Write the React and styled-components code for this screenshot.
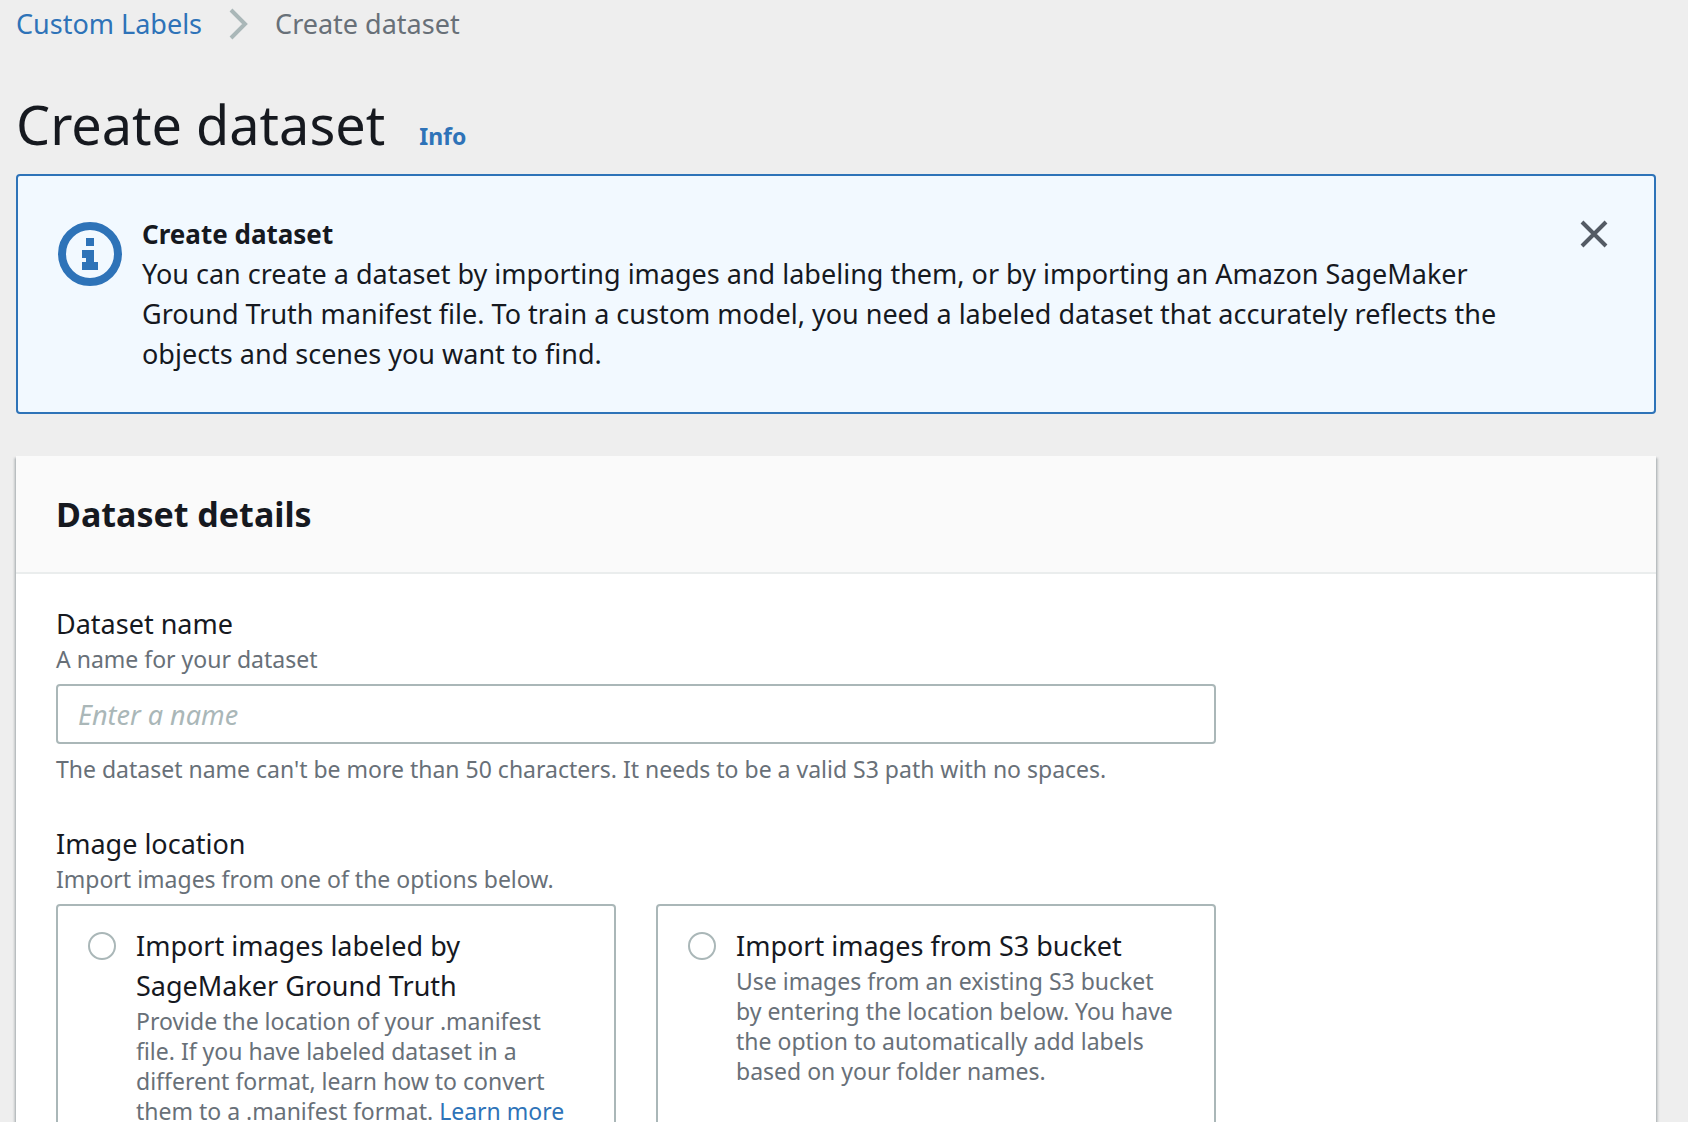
import React from 'react';
import styled, { createGlobalStyle } from "styled-components";

const GlobalStyle = createGlobalStyle`
  * {
    box-sizing: border-box;
  }

  body {
    margin: 0;
    height: 100vh;
    overflow: hidden;
    background-color: #eeeeee;
    color: #16191f;
    font-family: "Noto Sans", "Open Sans", sans-serif;
    font-size: 27px;
    line-height: 40px;
  }
`

const Page = styled.main`
  padding: 4px 32px 40px 16px;
`

const Link = styled.a`
  color: #2e73b8;
  text-decoration: none;
`

const Breadcrumbs = styled.nav`
  display: flex;
  align-items: center;
  gap: 27px;
`

const Current = styled.span`
  color: #687078;
`

const Heading = styled.header`
  display: flex;
  align-items: baseline;
  gap: 34px;
  padding: 40px 0 10px;
`

const Title = styled.h1`
  margin: 0;
  font-size: 54px;
  font-weight: 400;
  line-height: 80px;
`

const InfoLink = styled(Link)`
  font-size: 23px;
  font-weight: 700;
`

const Alert = styled.section`
  display: flex;
  align-items: flex-start;
  gap: 20px;
  padding: 38px 46px 38px 40px;
  border: 2px solid #2e73b8;
  border-radius: 4px;
  background-color: #f2f9ff;
`

const InfoIcon = styled.svg`
  flex: none;
  width: 64px;
  height: 64px;
  margin-top: 8px;
`

const AlertText = styled.div`
  flex: 1;
`

const AlertTitle = styled.div`
  font-size: 26px;
  font-weight: 700;
`

const AlertMessage = styled.p`
  margin: 0;
`

const CloseButton = styled.button`
  display: flex;
  margin-left: 40px;
  padding: 6px 0;
  border: none;
  background: none;
  color: #545b64;
  cursor: pointer;
`

const Panel = styled.section`
  margin-top: 42px;
  background-color: #ffffff;
  box-shadow: 0 2px 2px 0 rgba(0, 28, 36, 0.3), 2px 2px 2px 0 rgba(0, 28, 36, 0.15), -2px 2px 2px 0 rgba(0, 28, 36, 0.15);
`

const PanelHeader = styled.div`
  padding: 38px 40px;
  border-bottom: 2px solid #eaeded;
  background-color: #fafafa;
`

const PanelTitle = styled.h2`
  margin: 0;
  font-size: 34px;
  font-weight: 700;
  line-height: 40px;
`

const PanelBody = styled.div`
  display: flex;
  flex-direction: column;
  gap: 40px;
  max-width: 1240px;
  padding: 30px 40px;
`

const Field = styled.div`
  display: flex;
  flex-direction: column;
`

const Label = styled.label`
  display: block;
`

const Hint = styled.div`
  color: #687078;
  font-size: 23px;
  line-height: 30px;
`

const Constraint = styled(Hint)`
  margin-top: 10px;
`

const Input = styled.input`
  width: 100%;
  height: 60px;
  margin-top: 10px;
  padding: 0 20px;
  border: 2px solid #aab7b8;
  border-radius: 4px;
  background-color: #ffffff;
  color: #16191f;
  font-family: inherit;
  font-size: 27px;

  &::placeholder {
    color: #aab7b8;
    font-style: italic;
    opacity: 1;
  }
`

const Tiles = styled.div`
  display: grid;
  grid-template-columns: 1fr 1fr;
  gap: 40px;
  margin-top: 10px;
`

const Tile = styled.div`
  display: flex;
  align-items: flex-start;
  gap: 20px;
  padding: 20px 34px 20px 30px;
  border: 2px solid #aab7b8;
  border-radius: 4px;
`

const Radio = styled.input`
  flex: none;
  appearance: none;
  width: 28px;
  height: 28px;
  margin: 6px 0;
  border: 2px solid #aab7b8;
  border-radius: 50%;
  background-color: #ffffff;

  &:checked {
    border: 8px solid #2e73b8;
  }
`

const options = [
    {
        id: "ground-truth",
        title: "Import images labeled by SageMaker Ground Truth",
        text: "Provide the location of your .manifest file. If you have labeled dataset in a different format, learn how to convert them to a .manifest format. ",
        link: "Learn more",
    },
    {
        id: "s3-bucket",
        title: "Import images from S3 bucket",
        text: "Use images from an existing S3 bucket by entering the location below. You have the option to automatically add labels based on your folder names.",
    },
]

const App = () => {
    return (
        <>
            <GlobalStyle/>
            <Page>
                <Breadcrumbs aria-label="Breadcrumbs">
                    <Link href="#labels">Custom Labels</Link>
                    <svg width="19" height="32" viewBox="0 0 19 32" fill="none" stroke="#aab7b8" strokeWidth="4">
                        <path d="M2 2l14 14L2 30"/>
                    </svg>
                    <Current aria-current="page">Create dataset</Current>
                </Breadcrumbs>
                <Heading>
                    <Title>Create dataset</Title>
                    <InfoLink href="#info">Info</InfoLink>
                </Heading>
                <Alert>
                    <InfoIcon viewBox="0 0 64 64">
                        <circle cx="32" cy="32" r="28" fill="none" stroke="#2e73b8" strokeWidth="8"/>
                        <path d="M28 16h8v8h-8zM24 28h12v12h4v8H24v-8h4v-4h-4z" fill="#2e73b8"/>
                    </InfoIcon>
                    <AlertText>
                        <AlertTitle>Create dataset</AlertTitle>
                        <AlertMessage>
                            You can create a dataset by importing images and labeling them, or by importing an Amazon SageMaker Ground Truth manifest file. To train a custom model, you need a labeled dataset that accurately reflects the objects and scenes you want to find.
                        </AlertMessage>
                    </AlertText>
                    <CloseButton aria-label="Close">
                        <svg width="28" height="28" viewBox="0 0 28 28" fill="none" stroke="currentColor" strokeWidth="4">
                            <path d="M2 2l24 24M26 2L2 26"/>
                        </svg>
                    </CloseButton>
                </Alert>
                <Panel>
                    <PanelHeader>
                        <PanelTitle>Dataset details</PanelTitle>
                    </PanelHeader>
                    <PanelBody>
                        <Field>
                            <Label htmlFor="dataset-name">Dataset name</Label>
                            <Hint>A name for your dataset</Hint>
                            <Input id="dataset-name" type="text" placeholder="Enter a name"/>
                            <Constraint>The dataset name can't be more than 50 characters. It needs to be a valid S3 path with no spaces.</Constraint>
                        </Field>
                        <Field role="radiogroup" aria-labelledby="image-location">
                            <div id="image-location">Image location</div>
                            <Hint>Import images from one of the options below.</Hint>
                            <Tiles>
                                {options.map((option) => (
                                    <Tile key={option.id}>
                                        <Radio type="radio" name="location" id={option.id}/>
                                        <div>
                                            <Label htmlFor={option.id}>{option.title}</Label>
                                            <Hint>
                                                {option.text}
                                                {option.link && <Link href="#manifest">{option.link}</Link>}
                                            </Hint>
                                        </div>
                                    </Tile>
                                ))}
                            </Tiles>
                        </Field>
                    </PanelBody>
                </Panel>
            </Page>
        </>
    )
}


export default App;
